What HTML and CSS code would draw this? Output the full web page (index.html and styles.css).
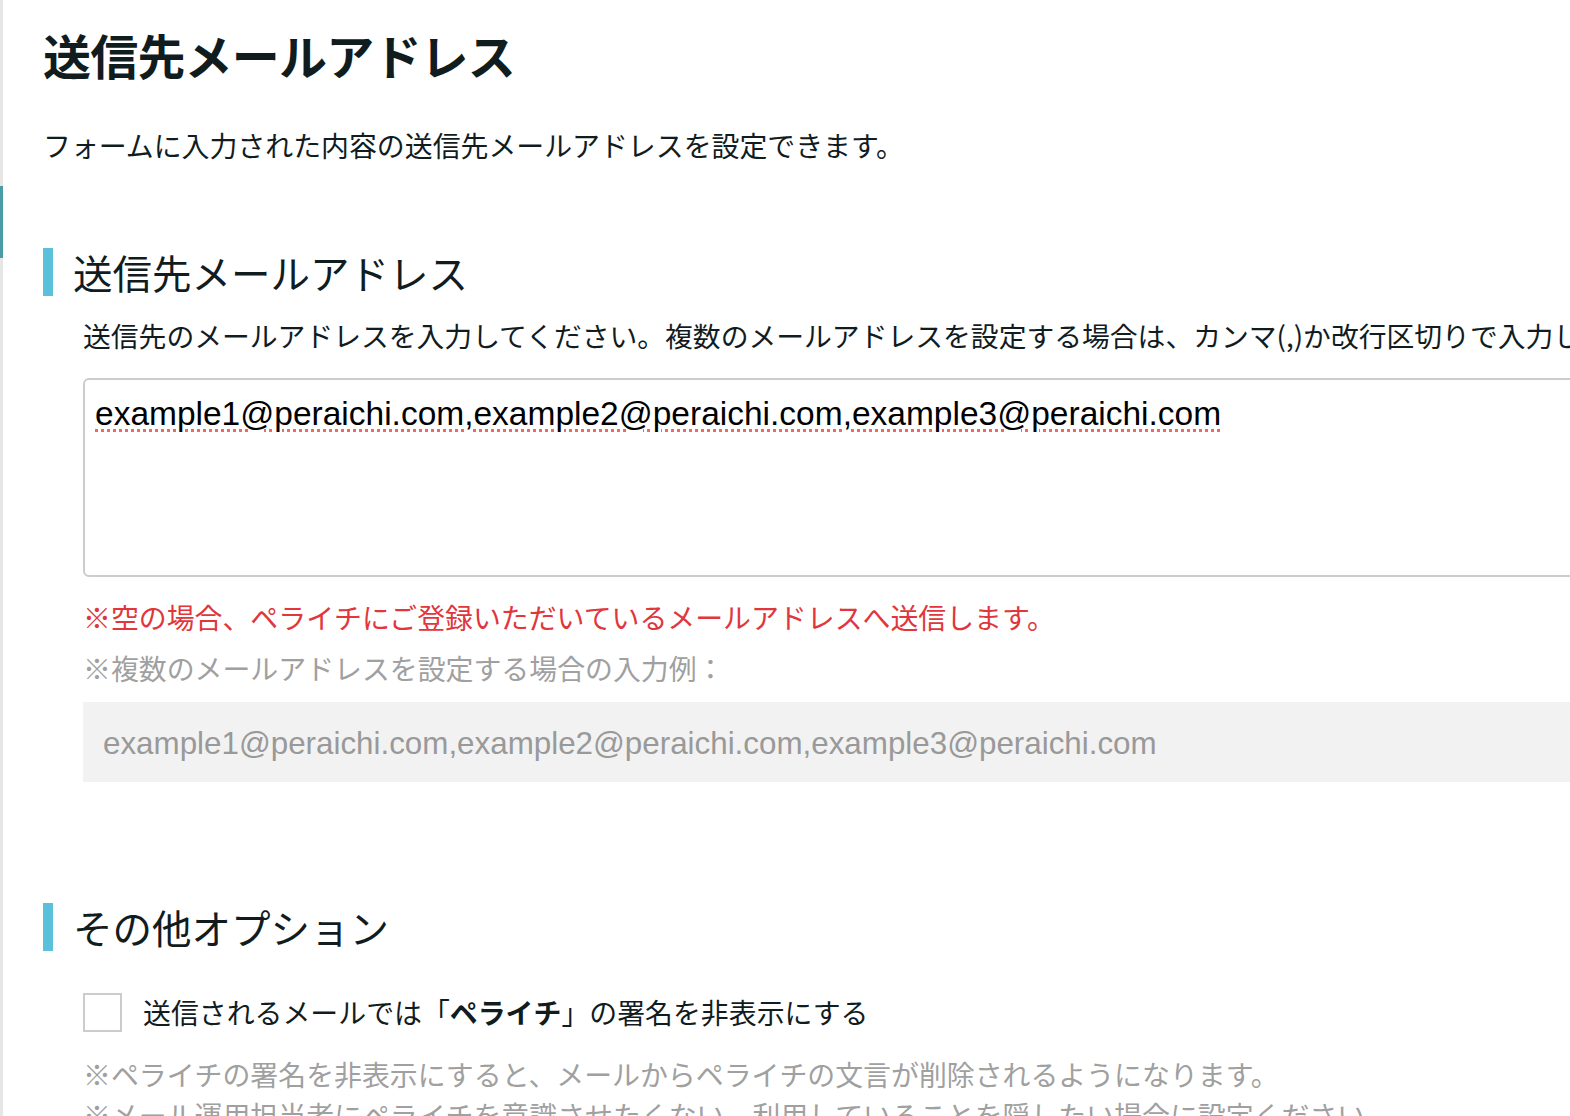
FILE: index.html
```html
<!DOCTYPE html>
<html lang="ja">
<head>
<meta charset="utf-8">
<title>送信先メールアドレス</title>
<link rel="stylesheet" href="styles.css">
</head>
<body>
<div class="page">
  <aside class="rail"><div class="rail-active"></div></aside>
  <main class="main">
    <h1 class="title">送信先メールアドレス</h1>
    <p class="lead">フォームに入力された内容の送信先メールアドレスを設定できます。</p>

    <section class="section">
      <h2 class="section-head">送信先メールアドレス</h2>
      <div class="section-body">
        <p class="help">送信先のメールアドレスを入力してください。複数のメールアドレスを設定する場合は、カンマ(,)か改行区切りで入力してください。</p>
        <div class="textarea"><span class="misspelled">example1@peraichi.com,example2@peraichi.com,example3@peraichi.com</span></div>
        <p class="note-red">※空の場合、ペライチにご登録いただいているメールアドレスへ送信します。</p>
        <p class="note-grey">※複数のメールアドレスを設定する場合の入力例：</p>
        <div class="example">example1@peraichi.com,example2@peraichi.com,example3@peraichi.com</div>
      </div>
    </section>

    <section class="section section-options">
      <h2 class="section-head">その他オプション</h2>
      <div class="section-body">
        <label class="check-row">
          <span class="checkbox"></span>
          <span class="check-label">送信されるメールでは「<b>ペライチ</b>」の署名を非表示にする</span>
        </label>
        <p class="note-grey note-tight first">※ペライチの署名を非表示にすると、メールからペライチの文言が削除されるようになります。</p>
        <p class="note-grey note-tight">※メール運用担当者にペライチを意識させたくない、利用していることを隠したい場合に設定ください。</p>
      </div>
    </section>
  </main>
</div>
</body>
</html>
```

FILE: styles.css
```css
html, body {
  margin: 0;
  padding: 0;
  background: #ffffff;
  overflow: hidden;
}

body {
  font-family: "Noto Sans CJK JP", "Noto Sans", sans-serif;
  color: #111c1f;
}

.page {
  display: flex;
  width: 1570px;
  height: 1116px;
  overflow: hidden;
}

.rail {
  flex: 0 0 3px;
  background: #e6e6e6;
}

.rail-active {
  margin-top: 186px;
  height: 72px;
  background: #4b9ba6;
}

.main {
  flex: 0 0 1760px;
  padding: 18px 0 0 40px;
  box-sizing: border-box;
}

.title {
  margin: 0;
  font-size: 48px;
  line-height: 72px;
  font-weight: 700;
  letter-spacing: -0.8px;
}

.lead {
  margin: 34px 0 0;
  font-size: 27.9px;
  line-height: 42px;
  white-space: nowrap;
}

.section {
  margin-top: 82px;
}

.section-options {
  margin-top: 121px;
}

.section-head {
  margin: 0;
  display: flex;
  align-items: center;
  gap: 20px;
  height: 48px;
  font-size: 39.5px;
  font-weight: 400;
  line-height: 44px;
}

.section-head::before {
  content: "";
  flex: 0 0 10px;
  align-self: stretch;
  background: #5bc1db;
}

.section-body {
  padding-left: 40px;
}

.help {
  margin: 18px 0 0;
  font-size: 27.8px;
  line-height: 42px;
  white-space: nowrap;
}

.textarea {
  margin-top: 22px;
  height: 199px;
  box-sizing: border-box;
  border: 2px solid #cccccc;
  border-radius: 6px;
  padding: 14px 10px;
  font-family: "Liberation Sans", Arial, sans-serif;
  font-size: 33.5px;
  line-height: 40px;
  color: #000000;
  white-space: nowrap;
}

.misspelled {
  text-decoration: underline dotted #ec6a62;
  text-decoration-thickness: 3px;
  text-underline-offset: 4px;
}

.note-red {
  margin: 19px 0 0;
  font-size: 27.9px;
  line-height: 42px;
  color: #e0363c;
  white-space: nowrap;
}

.note-grey {
  margin: 9px 0 0;
  font-size: 27.9px;
  line-height: 42px;
  color: #a0a0a0;
  white-space: nowrap;
}

.example {
  margin-top: 13px;
  height: 80px;
  display: flex;
  align-items: center;
  padding: 3px 0 0 20px;
  box-sizing: border-box;
  background: #f2f2f2;
  font-family: "Liberation Sans", Arial, sans-serif;
  font-size: 31.35px;
  color: #999999;
  white-space: nowrap;
}

.check-row {
  margin-top: 40px;
  display: flex;
  align-items: center;
  gap: 21px;
}

.checkbox {
  flex: 0 0 auto;
  width: 39px;
  height: 39px;
  box-sizing: border-box;
  border: 2px solid #cccccc;
  background: #ffffff;
}

.check-label {
  font-size: 27.9px;
  line-height: 42px;
  white-space: nowrap;
}

.check-label b {
  font-weight: 700;
}

.note-tight {
  margin: 0;
  line-height: 41px;
}

.note-tight.first {
  margin-top: 21px;
}
```
